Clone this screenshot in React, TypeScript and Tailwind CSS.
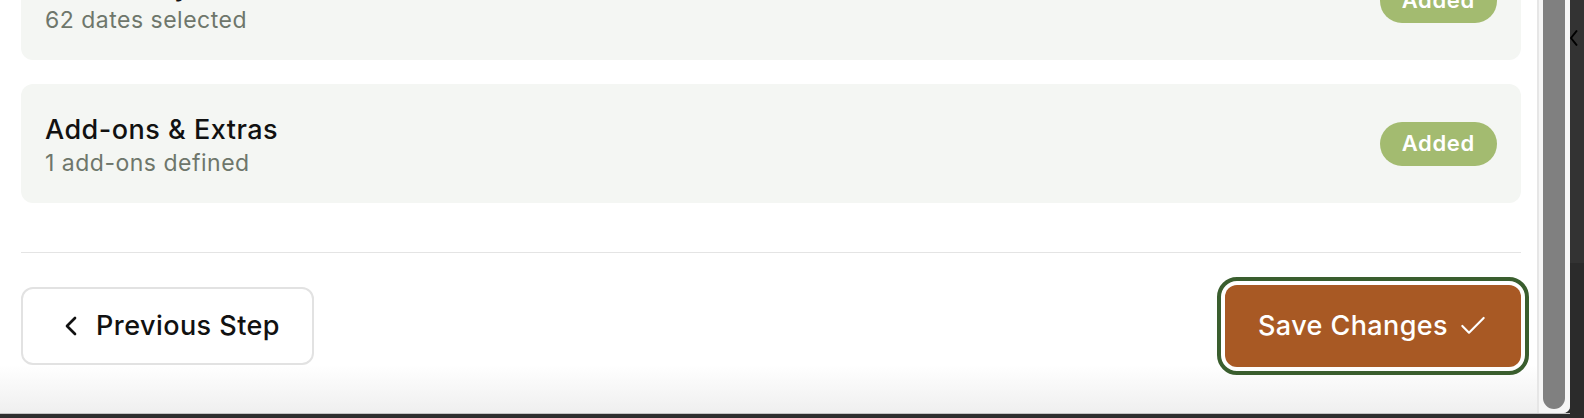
import React from "react";

function Card({ title, subtitle }: { title: string; subtitle: string }) {
  return (
    <div className="flex h-[119px] items-center justify-between rounded-[12px] bg-[#f4f6f3] px-6">
      <div className="-mt-[1px] flex flex-col">
        <div className="text-[27px] font-medium leading-[42px] tracking-[0.5px] text-[#111111]">{title}</div>
        <div className="-mt-[3px] text-[23px] leading-[30px] tracking-[0.5px] text-[#6e766b]">{subtitle}</div>
      </div>
      <div className="flex h-[44px] items-center rounded-full bg-[#a3bb70] px-[22px] text-[22px] font-semibold tracking-[0.7px] text-white">
        Added
      </div>
    </div>
  );
}

export default function App() {
  return (
    <div className="flex h-[418px] w-[1584px] overflow-hidden bg-[#2e2e2e] font-[Inter,sans-serif]">
      <div className="flex h-[414px] w-[1570px] shrink-0 flex-col">
        <div className="flex h-[413px] overflow-hidden rounded-br-[7px] bg-[linear-gradient(to_bottom,#ffffff_365px,#efefef)]">
          <div className="w-[1537px] shrink-0 pl-[21px] pr-[16px]">
            <div className="-mt-[59px] flex flex-col gap-6">
              <Card title="Availability" subtitle="62 dates selected" />
              <Card title="Add-ons & Extras" subtitle="1 add-ons defined" />
            </div>
            <div className="mt-[49px] border-t border-[#e4e4e4] pt-[32px]">
              <div className="flex items-center justify-between">
                <button className="flex h-[78px] items-center gap-[9px] rounded-[12px] border-2 border-[#e2e2e2] bg-white pl-[32px] pr-[32px] text-[27px] font-medium tracking-[0.45px] text-[#111111]">
                  <svg width="32" height="32" viewBox="0 0 24 24" fill="none" stroke="currentColor" strokeWidth="2" strokeLinecap="round" strokeLinejoin="round">
                    <path d="m15 18-6-6 6-6" />
                  </svg>
                  <span>Previous Step</span>
                </button>
                <button className="flex h-[82px] items-center gap-[9px] rounded-[12px] bg-[#a85924] pl-[33px] pr-[32px] text-[27px] font-medium tracking-[0.4px] text-white outline-4 outline-offset-4 outline-[#3a5e2e]">
                  <span>Save Changes</span>
                  <svg width="32" height="32" viewBox="0 0 24 24" fill="none" stroke="currentColor" strokeWidth="1.6" strokeLinecap="round" strokeLinejoin="round">
                    <path d="M20 6 9 17l-5-5" />
                  </svg>
                </button>
              </div>
            </div>
          </div>
          <div className="flex h-full flex-1 border-l-2 border-[#e6e6e6] bg-[#f6f6f6] pl-[4px] pr-[5px]">
            <div className="h-[409px] w-[22px] rounded-b-full bg-[#808080]" />
          </div>
        </div>
        <div className="h-[1px] bg-[#c4c4c4]" />
      </div>
      <div className="flex flex-1 flex-col">
        <div className="h-[263px] bg-[#333333] pt-[30px]">
          <svg width="8" height="16" viewBox="0 0 8 16" fill="none" stroke="#000000" strokeWidth="2">
            <path d="M7 0.5 1 8l6 7.5" />
          </svg>
        </div>
        <div className="flex-1 bg-[#2b2b2b]" />
      </div>
    </div>
  );
}
